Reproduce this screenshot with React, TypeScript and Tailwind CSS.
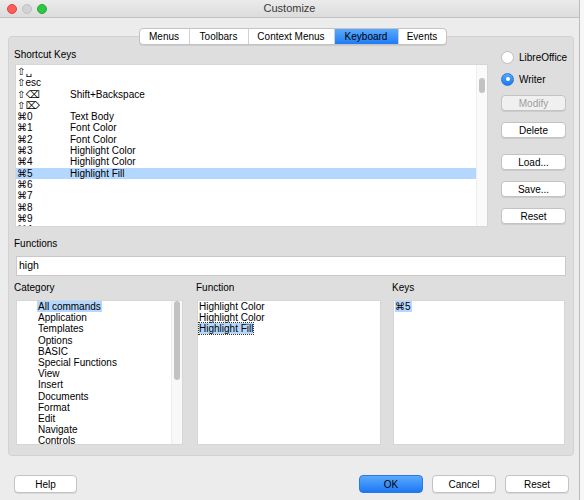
import React from 'react';

const shortcuts: [string, string][] = [
  ['⇧␣', ''],
  ['⇧esc', ''],
  ['⇧⌫', 'Shift+Backspace'],
  ['⇧⌦', ''],
  ['⌘0', 'Text Body'],
  ['⌘1', 'Font Color'],
  ['⌘2', 'Font Color'],
  ['⌘3', 'Highlight Color'],
  ['⌘4', 'Highlight Color'],
  ['⌘5', 'Highlight Fill'],
  ['⌘6', ''],
  ['⌘7', ''],
  ['⌘8', ''],
  ['⌘9', ''],
  ['⌘A', ''],
];

const categories = [
  'All commands',
  'Application',
  'Templates',
  'Options',
  'BASIC',
  'Special Functions',
  'View',
  'Insert',
  'Documents',
  'Format',
  'Edit',
  'Navigate',
  'Controls',
];

const tabs = [
  { label: 'Menus', w: 'w-[49px]' },
  { label: 'Toolbars', w: 'w-[59px]' },
  { label: 'Context Menus', w: 'w-[86px]' },
  { label: 'Keyboard', w: 'w-[64px]' },
  { label: 'Events', w: 'w-[48px]' },
];

const Button = ({ label, disabled }: { label: string; disabled?: boolean }) => (
  <div
    className={`h-[16px] w-[65px] flex items-center justify-center rounded-[4px] border border-[#c3c3c3] shadow-[0_1px_0_rgba(0,0,0,0.08)] ${
      disabled ? 'bg-[#f0f0f0] text-[#9c9c9c]' : 'bg-white text-black'
    }`}
  >
    {label}
  </div>
);

const Radio = ({ label, checked }: { label: string; checked?: boolean }) => (
  <div className="h-[12px] flex items-center gap-[5px]">
    {checked ? (
      <div className="w-[13px] h-[13px] rounded-full bg-gradient-to-b from-[#57a6fb] to-[#1677f4] border border-[#2a78d6] flex items-center justify-center">
        <div className="w-[4px] h-[4px] rounded-full bg-white" />
      </div>
    ) : (
      <div className="w-[13px] h-[13px] rounded-full bg-white border border-[#bdbdbd]" />
    )}
    <span>{label}</span>
  </div>
);

export default function App() {
  return (
    <div className="w-[584px] h-[500px] flex bg-[#f7f7f7] font-['Liberation_Sans','DejaVu_Sans',sans-serif] text-[10px] text-black overflow-hidden">
      <div className="w-[580px] h-[500px] flex flex-col bg-[#ececec] border-r border-[#bcbcbc]">
        {/* title bar */}
        <div className="h-[18px] flex items-center bg-gradient-to-b from-[#ebebeb] to-[#dcdcdc] border-b border-[#c2c2c2]">
          <div className="w-[100px] flex items-center gap-[5px] pl-[7px]">
            <div className="w-[10px] h-[10px] rounded-full bg-[#fc5f57] border border-[#e0443e]" />
            <div className="w-[10px] h-[10px] rounded-full bg-[#d3d3d3] border border-[#c0c0c0]" />
            <div className="w-[10px] h-[10px] rounded-full bg-[#2fc840] border border-[#23a834]" />
          </div>
          <div className="flex-1 text-center text-[11px] text-[#3a3a3a]">Customize</div>
          <div className="w-[100px]" />
        </div>

        {/* tabs */}
        <div className="mt-[10px] -mb-[9px] relative z-10 flex justify-center pl-[6px]">
          <div className="flex h-[17px] rounded-[4px] border border-[#c3c3c3] bg-white shadow-[0_1px_0_rgba(0,0,0,0.08)] overflow-hidden">
            {tabs.map((t, i) => (
              <div
                key={t.label}
                className={`${t.w} flex items-center justify-center ${i > 0 ? 'border-l border-[#d0d0d0]' : ''} ${
                  t.label === 'Keyboard' ? 'bg-gradient-to-b from-[#5aa9fd] to-[#1c7cf6]' : ''
                }`}
              >
                {t.label}
              </div>
            ))}
          </div>
        </div>

        {/* panel */}
        <div className="ml-[8px] w-[566px] h-[420px] bg-[#dedede] border border-[#d2d2d2] rounded-[4px] pl-[5px] pt-[12px] flex flex-col">
          <div className="flex items-start">
            <div className="flex flex-col">
              <div className="h-[12px] leading-[12px]">Shortcut Keys</div>
              <div className="mt-[3px] ml-[1px] w-[473px] h-[163px] bg-white border border-[#d6d6d6] flex overflow-hidden">
                <div className="flex-1 flex flex-col pt-[1px]">
                  {shortcuts.map(([k, f]) => (
                    <div
                      key={k}
                      className={`h-[11.3px] shrink-0 flex items-center leading-[11.3px] ${k === '⌘5' ? 'bg-[#b3d7ff]' : ''}`}
                    >
                      <span className="w-[54px] pl-[1px] shrink-0">{k}</span>
                      <span>{f}</span>
                    </div>
                  ))}
                </div>
                <div className="w-[11px] h-full bg-[#fafafa] border-l border-[#eeeeee] pt-[13px] flex justify-center">
                  <div className="w-[6px] h-[15px] rounded-full bg-[#c2c2c2]" />
                </div>
              </div>
            </div>
            <div className="ml-[13px] mt-[2px] flex flex-col">
              <Radio label="LibreOffice" />
              <div className="mt-[10px]">
                <Radio label="Writer" checked />
              </div>
              <div className="mt-[10px]">
                <Button label="Modify" disabled />
              </div>
              <div className="mt-[11px]">
                <Button label="Delete" />
              </div>
              <div className="mt-[16px]">
                <Button label="Load..." />
              </div>
              <div className="mt-[11px]">
                <Button label="Save..." />
              </div>
              <div className="mt-[11px]">
                <Button label="Reset" />
              </div>
            </div>
          </div>

          <div className="mt-[11px] h-[12px] leading-[12px]">Functions</div>
          <div className="mt-[6px] ml-[2px] w-[550px] h-[20px] bg-white border border-[#c9c9c9] flex items-center pl-[2px] text-[10.5px]">
            high
          </div>

          <div className="mt-[6px] flex">
            <div className="w-[169px] flex flex-col">
              <div className="h-[12px] leading-[12px]">Category</div>
              <div className="mt-[6px] ml-[2px] w-[167px] h-[145px] bg-white border border-[#d6d6d6] flex overflow-hidden">
                <div className="flex-1 flex flex-col pl-[21px]">
                  {categories.map((c, i) => (
                    <div key={c} className="h-[11.2px] shrink-0 leading-[11.2px]">
                      <span className={i === 0 ? 'bg-[#b3d7ff] px-[1px] -ml-[1px]' : ''}>{c}</span>
                    </div>
                  ))}
                </div>
                <div className="w-[11px] h-full bg-[#f8f8f8] border-l border-[#ededed] flex justify-center">
                  <div className="w-[6px] h-[79px] rounded-full bg-[#c2c2c2]" />
                </div>
              </div>
            </div>
            <div className="ml-[13px] w-[185px] flex flex-col">
              <div className="h-[12px] leading-[12px]">Function</div>
              <div className="mt-[6px] ml-[1px] w-[184px] h-[145px] bg-white border border-[#d6d6d6] flex flex-col pl-[1px]">
                <div className="h-[11.2px] leading-[11.2px]">Highlight Color</div>
                <div className="h-[11.2px] leading-[11.2px]">Highlight Color</div>
                <div className="h-[11.2px] leading-[11.2px]">
                  <span className="bg-[#b3d7ff] outline-1 outline-dotted outline-[#333]">Highlight Fill</span>
                </div>
              </div>
            </div>
            <div className="ml-[11px] w-[173px] flex flex-col">
              <div className="h-[12px] leading-[12px]">Keys</div>
              <div className="mt-[6px] ml-[1px] w-[172px] h-[145px] bg-white border border-[#d6d6d6] flex flex-col pl-[1px]">
                <div className="h-[11.2px] leading-[11.2px]">
                  <span className="bg-[#b3d7ff] pr-[1px]">⌘5</span>
                </div>
              </div>
            </div>
          </div>
        </div>

        {/* bottom buttons */}
        <div className="mt-[19px] flex items-center pl-[14px]">
          <div className="w-[63px] h-[18px] flex items-center justify-center rounded-[4px] border border-[#c3c3c3] bg-white shadow-[0_1px_0_rgba(0,0,0,0.08)]">
            Help
          </div>
          <div className="ml-[282px] w-[64px] h-[18px] flex items-center justify-center rounded-[4px] border border-[#2a78e0] bg-gradient-to-b from-[#5aa9fd] to-[#1a78f5]">
            OK
          </div>
          <div className="ml-[9px] w-[64px] h-[18px] flex items-center justify-center rounded-[4px] border border-[#c3c3c3] bg-white shadow-[0_1px_0_rgba(0,0,0,0.08)]">
            Cancel
          </div>
          <div className="ml-[9px] w-[64px] h-[18px] flex items-center justify-center rounded-[4px] border border-[#c3c3c3] bg-white shadow-[0_1px_0_rgba(0,0,0,0.08)]">
            Reset
          </div>
        </div>
      </div>
      <div className="flex-1" />
    </div>
  );
}
